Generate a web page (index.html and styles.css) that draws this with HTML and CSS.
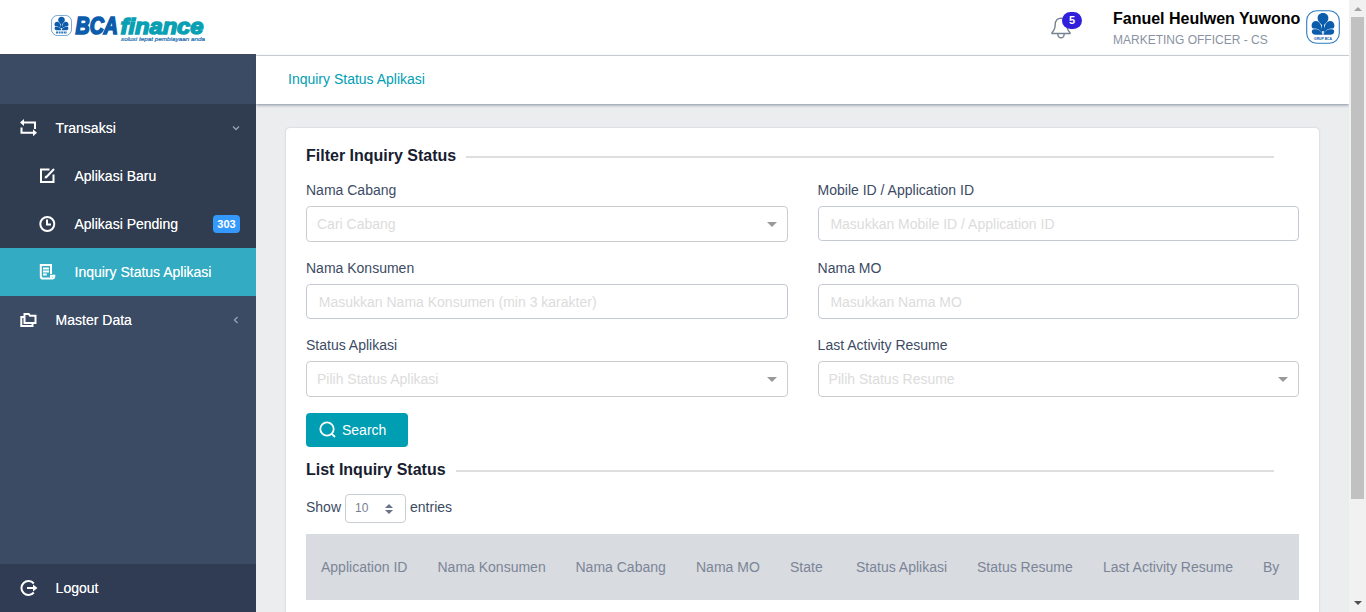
FILE: index.html
```html
<!DOCTYPE html>
<html lang="id">
<head>
<meta charset="utf-8">
<title>Inquiry Status Aplikasi</title>
<link rel="stylesheet" href="styles.css">
</head>
<body>
<svg class="defs" width="0" height="0">
  <symbol id="emblem" viewBox="0 0 34 34">
    <rect x=".7" y=".7" width="32.6" height="32.6" rx="10" fill="#fff" stroke="#2f7bbd" stroke-width="1.1"/>
    <g fill="#0b5cab">
      <path d="M17 3c3.500 0 5.400 2.400 5.400 5.200 0 2.600-1.800 4.300-4.400 6.800v6h-2v-6c-2.600-2.500-4.400-4.200-4.400-6.800C11.600 5.400 13.500 3 17 3z"/>
      <path d="M16.300 22c-.3-7-3-11-6.300-11-2.600 0-4.400 2-4.400 4.500 0 1.300.5 2.300 1.300 3C10 18 14 19 16.300 23z"/>
      <path d="M17.700 22c.3-7 3-11 6.300-11 2.600 0 4.400 2 4.400 4.500 0 1.300-.5 2.300-1.300 3C24 18 20 19 17.700 23z"/>
      <path d="M16.700 24.800c-.8-4-4.500-6-8.700-5.600-1.500.1-2.200 1-2.200 2.300 0 2 1.600 3.300 4 3.300zM17.300 24.800c.8-4 4.500-6 8.700-5.600 1.500.1 2.200 1 2.200 2.300 0 2-1.600 3.300-4 3.300z"/>
    </g>
  </symbol>
</svg>
<div class="app">
  <aside class="sidebar">
    <div class="brand">
      <svg width="256" height="54" viewBox="0 0 256 54">
        <use href="#emblem" x="51" y="15" width="21" height="21"/>
        <path d="M56 32.500h11" stroke="#2f7bbd" stroke-width="1.800" stroke-dasharray="2 .6"/>
        <text class="logo-bca" x="75.500" y="34" textLength="42.500" lengthAdjust="spacingAndGlyphs">BCA</text>
        <text class="logo-fin" x="120.500" y="34" textLength="83" lengthAdjust="spacingAndGlyphs">finance</text>
        <text class="logo-tag" x="121" y="41" textLength="84" lengthAdjust="spacingAndGlyphs">solusi tepat pembiayaan anda</text>
      </svg>
    </div>
    <nav class="nav">
      <div class="group">
        <a class="item top"><svg class="ico" viewBox="0 0 18 18"><path d="M4 3.500h12V10M2.500 8.500v5.300h12"/><path class="solid" d="M1 3.500 5 0v7zM18 13.800l-4-3.500v7z"/></svg><span>Transaksi</span>
          <svg class="chev" viewBox="0 0 8 8"><path d="m1 2.500 3 3 3-3"/></svg></a>
        <a class="item sub"><svg class="ico" viewBox="0 0 18 18"><path d="M11.500 2.500H3v12.500h12.500V7.500M8 10.500l8-8.500"/><path class="solid" d="M7 8.500l2.500 2.500-2.900.6z"/></svg><span>Aplikasi Baru</span></a>
        <a class="item sub"><svg class="ico" viewBox="0 0 18 18"><circle cx="9.300" cy="9" r="7"/><path d="M9 4.500v5h4"/></svg><span>Aplikasi Pending</span><b class="count">303</b></a>
        <a class="item sub active"><svg class="ico" viewBox="0 0 18 18"><path d="M13 11V2H2.800V13.200c0 1.500.9 2.400 2.200 2.400h9.300c1.400 0 2-1 2-2.800H13v2.500M5 5.600h6M5 8.600h6M5 11.600h3.800"/></svg><span>Inquiry Status Aplikasi</span></a>
      </div>
      <a class="item top"><svg class="ico" viewBox="0 0 18 18"><path d="M5.500 12V3h4.200l1.300 1.700h5.500V12zM5 6H2.300v9H13.500v-2.500"/></svg><span>Master Data</span>
        <svg class="chev" viewBox="0 0 8 8"><path d="M5.500 1l-3 3 3 3"/></svg></a>
    </nav>
    <a class="item top logout"><svg class="ico" viewBox="0 0 18 18"><path d="M14.800 4.500A7 7 0 1 0 14.800 13.500M8 9h6"/><path class="solid" d="M18.500 9l-4.500-3.500v7z"/></svg><span>Logout</span></a>
  </aside>
  <main class="main">
    <header class="header">
      <div class="bell">
        <svg width="20" height="22" viewBox="0 0 20 22"><path d="M10 1.200c-3.700 0-5.800 2.800-5.800 6.300 0 4-1 6-3.200 8.200v.8h18v-.8c-2.200-2.200-3.200-4.200-3.200-8.200 0-3.500-2.100-6.300-5.800-6.300zM6.800 17a3.200 3.800 0 0 0 6.400 0"/></svg>
        <b>5</b>
      </div>
      <div class="user"><strong>Fanuel Heulwen Yuwono</strong><span>MARKETING OFFICER - CS</span></div>
      <svg class="avatar" width="34" height="34"><use href="#emblem" width="34" height="34"/><text class="emblem-text" x="17" y="30" text-anchor="middle" textLength="18" lengthAdjust="spacingAndGlyphs">GRUP BCA</text></svg>
    </header>
    <div class="crumb"><span>Inquiry Status Aplikasi</span></div>
    <section class="card">
      <h2 class="title"><span>Filter Inquiry Status</span></h2>
      <form class="filters">
        <div class="field"><label>Nama Cabang</label><div class="box select"><span>Cari Cabang</span></div></div>
        <div class="field"><label>Mobile ID / Application ID</label><div class="box input"><span>Masukkan Mobile ID / Application ID</span></div></div>
        <div class="field"><label>Nama Konsumen</label><div class="box input"><span>Masukkan Nama Konsumen (min 3 karakter)</span></div></div>
        <div class="field"><label>Nama MO</label><div class="box input"><span>Masukkan Nama MO</span></div></div>
        <div class="field"><label>Status Aplikasi</label><div class="box select"><span>Pilih Status Aplikasi</span></div></div>
        <div class="field"><label>Last Activity Resume</label><div class="box select"><span>Pilih Status Resume</span></div></div>
      </form>
      <button class="search"><svg width="18" height="18" viewBox="0 0 18 18"><circle cx="8" cy="8" r="6.700"/><path d="m12.800 12.800 3.200 3.200"/></svg><span>Search</span></button>
      <h2 class="title list"><span>List Inquiry Status</span></h2>
      <div class="length"><span>Show</span><div class="num"><span>10</span><svg width="8" height="10" viewBox="0 0 8 10"><path d="M0 4 4 0l4 4zM0 6l4 4 4-4z"/></svg></div><span>entries</span></div>
      <div class="thead">
        <span>Application ID</span><span>Nama Konsumen</span><span>Nama Cabang</span><span>Nama MO</span><span>State</span><span>Status Aplikasi</span><span>Status Resume</span><span>Last Activity Resume</span><span>By</span>
      </div>
    </section>
  </main>
  <div class="scroll"><i class="up"></i><div class="thumb"></div><i class="down"></i></div>
</div>
</body>
</html>
```
FILE: styles.css
```css
* { box-sizing: border-box; }
body { margin: 0; overflow: hidden; font: 14px/21px "Liberation Sans", Arial, sans-serif; color: #3c4b64; }
.defs { position: absolute; }
.app { display: flex; width: 1366px; height: 612px; overflow: hidden; background: #ebedef; }
.sidebar { width: 256px; flex: none; display: flex; flex-direction: column; background: #3c4b64; color: #fff; }
.brand { height: 54px; background: #fff; margin-bottom: 50px; }
.brand svg { display: block; }
.emblem-text { font: bold 4px "Liberation Sans", sans-serif; fill: #0b5cab; }
.logo-bca { font: italic bold 23.5px "Liberation Sans", sans-serif; fill: #0b5cab; stroke: #0b5cab; stroke-width: 1.7; }
.logo-fin { font: italic bold 22.5px "Liberation Sans", sans-serif; fill: #0aa0b4; stroke: #0aa0b4; stroke-width: 1.5; }
.logo-tag { font: italic 6.2px "Liberation Sans", sans-serif; fill: #1769ae; stroke: #1769ae; stroke-width: .2; }
.nav { flex: 1; }
.group { background: #303c50; }
.item { display: flex; align-items: center; height: 48px; padding-right: 16px; }
.item > span { text-shadow: 0 0 .6px rgba(255, 255, 255, .7); }
.top { padding-left: 19px; }
.sub { padding-left: 38px; }
.ico { width: 18px; height: 18px; flex: none; margin-right: 18.6px; overflow: visible; fill: none; stroke: #fff; stroke-width: 2; }
.sub .ico { margin-right: 18.5px; }
.solid { fill: #fff; stroke: none; }
.active { background: #32abc3; }
.chev { width: 8px; height: 8px; margin-left: auto; fill: none; stroke: #9aa3b1; stroke-width: 1.3; }
.count { margin-left: auto; width: 27px; height: 18px; border-radius: 4px; background: #39f; font-size: 11px; line-height: 18px; text-align: center; }
.logout { background: #303c54; }
.main { width: 1093px; flex: none; }
.header { height: 56px; background: #fff; border-bottom: 1px solid #d8dbe0; display: flex; align-items: flex-start; padding-right: 9px; justify-content: flex-end; }
.bell { position: relative; width: 32px; margin: 17px 30px 0 0; }
.bell svg { display: block; fill: none; stroke: #768192; stroke-width: 1.4; }
.bell b { position: absolute; left: 11px; top: -5px; width: 20px; height: 17px; border-radius: 9px; background: #321fdb; color: #fff; font-size: 11px; line-height: 17px; text-align: center; }
.user { width: 193px; padding-top: 8px; display: flex; flex-direction: column; align-items: flex-start; }
.user strong { font-size: 16px; line-height: 22px; color: #000; white-space: nowrap; }
.user span { font-size: 12px; line-height: 21px; color: #8a93a2; white-space: nowrap; }
.avatar { margin-top: 10px; }
.crumb { height: 48px; background: #fff; padding: 13px 32px; color: #009eb3; box-shadow: 0 1px 3px rgba(60,75,100,.6); }
.card { width: 1033px; height: 520px; margin: 24px 0 0 30px; padding: 17px 20px; background: #fff; border-radius: 4px; box-shadow: 0 0 2px rgba(60,75,100,.25); }
.title { margin: 0; padding-right: 25px; display: flex; align-items: center; gap: 10px; font-size: 16px; line-height: 21px; color: #17202f; white-space: nowrap; }
.title::after { content: ""; flex: 1; height: 2px; margin-top: 3px; background: #dedede; }
.filters { display: grid; grid-template-columns: 482px 481px; column-gap: 29.6px; grid-template-rows: 78px 77px 68px; margin-top: 14px; }
.field label { display: block; height: 26px; line-height: 21px; }
.box { display: flex; align-items: center; justify-content: space-between; border: 1px solid #c5cad2; border-radius: 4px; color: #dcdcdc; white-space: nowrap; }
.input { height: 35px; padding: 2px 0 0 11.8px; }
.select { height: 36px; padding: 0 10px; border-color: #ccc; }
.select::after { content: ""; border: 5px solid transparent; border-top-color: #999; border-bottom: 0; }
.search { display: flex; align-items: center; gap: 5px; width: 102px; height: 34px; margin-top: 10px; padding: 0 13px; border: 0; border-radius: 4px; background: #009eb3; color: #fff; font: inherit; }
.search svg { fill: none; stroke: #fff; stroke-width: 1.8; }
.list { margin-top: 12px; }
.length { display: flex; align-items: center; gap: 4px; height: 29px; margin: 14px 0 11px; }
.length > span { margin-top: -3px; }
.num { width: 61px; height: 29px; border: 1px solid #c9cdd4; border-radius: 4px; display: flex; align-items: center; justify-content: space-between; padding: 0 12px 0 9px; font-size: 12px; color: #768192; }
.num svg { fill: #687389; }
.thead { height: 66px; padding-left: 15px; display: grid; grid-template-columns: 116.5px 138px 120.5px 94px 66px 121px 126px 160px 31px; align-items: center; background: #d8dbe0; color: #7c8597; white-space: nowrap; }
.scroll { width: 17px; flex: none; background: #f1f1f1; display: flex; flex-direction: column; align-items: center; }
.thumb { width: 13px; height: 482px; margin: 6px 0 0; background: #c1c1c1; }
.up { border: 4px solid transparent; border-bottom-color: #a3a3a3; border-top: 0; margin-top: 7px; }
.down { border: 4px solid transparent; border-top-color: #505050; border-bottom: 0; margin: auto 0 7px; }
```
